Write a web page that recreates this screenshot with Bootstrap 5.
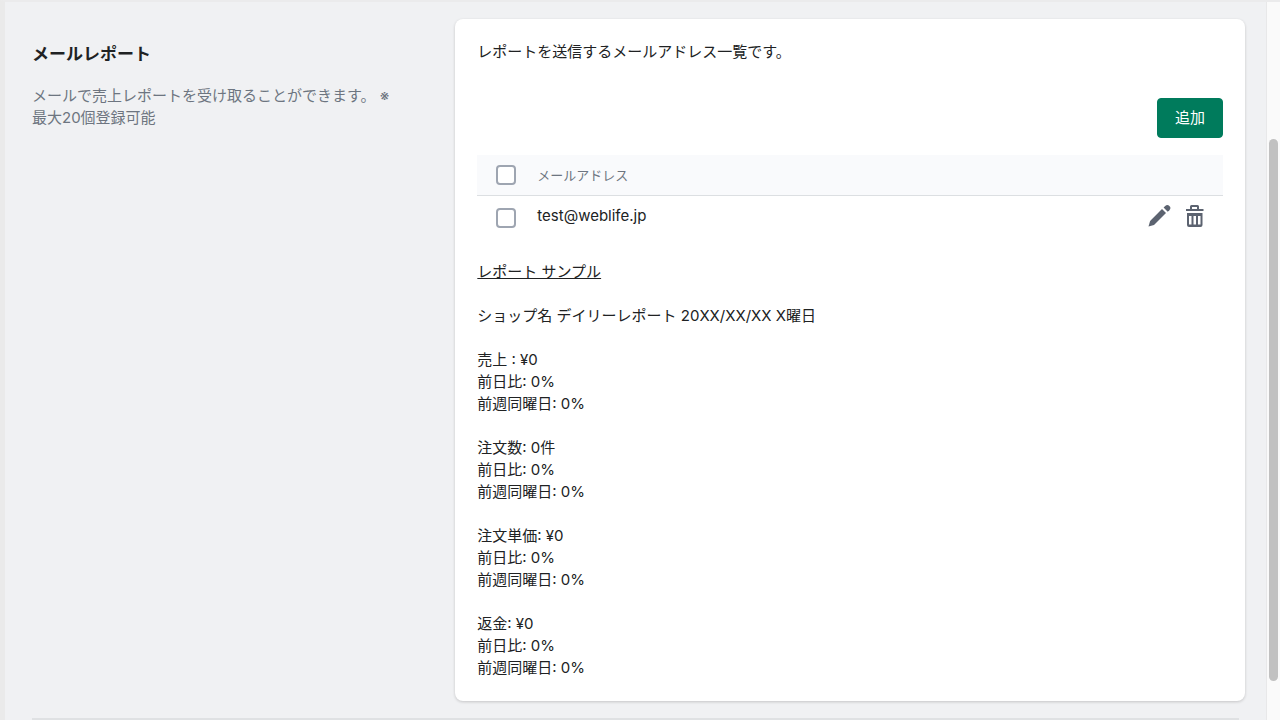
<!DOCTYPE html>
<html lang="ja">
<head>
<meta charset="utf-8">
<meta name="viewport" content="width=device-width, initial-scale=1">
<title>メールレポート</title>
<link href="https://cdn.jsdelivr.net/npm/bootstrap@5.3.0/dist/css/bootstrap.min.css" rel="stylesheet">
<style>
  body { font-family: Inter, "Noto Sans CJK JP", sans-serif; font-size: 15px; line-height: 22px; color: #202223; background: #f0f1f3; }
  .app-frame { border-left: 5px solid #eaeaea; border-top: 2px solid #ebebec; }
  .settings-page { padding: 17px 21px 0 27px; }
  .settings-side { width: 34.9%; padding: 23px 56px 0 0; }
  .settings-side h1 { font-size: 17px; line-height: 24px; margin-bottom: 19px; }
  .settings-side p { color: #6d7580; }
  .report-card { border: 0; border-radius: 8px; box-shadow: 0 1px 3px rgba(23,24,24,.2); }
  .report-card .card-body { padding: 22px; }
  .btn-add { --bs-btn-color: #fff; --bs-btn-bg: #007b5c; --bs-btn-border-color: #007b5c; --bs-btn-hover-color: #fff; --bs-btn-hover-bg: #006e52; --bs-btn-border-radius: 4px; --bs-btn-font-size: 15px; --bs-btn-line-height: 22px; --bs-btn-padding-y: 8px; --bs-btn-padding-x: 17px; }
  .card-actions { margin: 35px 0 17px; }
  .mail-table { --bs-table-bg: transparent; color: inherit; }
  .mail-table th, .mail-table td { padding: 0; height: 42px; border: 0; vertical-align: middle; }
  .mail-table thead th { height: 40px; background: #f9fafc; border-bottom: 1px solid #dcdfe2; font-size: 13px; font-weight: 400; color: #6d7580; }
  .mail-table .col-check { width: 60px; padding-left: 19px; }
  .mail-table .form-check-input { width: 20px; height: 20px; margin: 0; border: 2px solid #9ea5b1; border-radius: 4px; background-color: #fff; }
  .mail-table tbody .col-check { padding-top: 4px; }
  .icon-btn { width: 24px; height: 24px; color: #5c6370; }
  .icon-btn svg { width: 24px; height: 24px; }
  .report-text p { margin-bottom: 22px; }
  .page-rule { margin: 17px 6px 0 0; border-top: 2px solid #dfe1e3; opacity: 1; }
  .scroll-track { width: 14px; background: #fafafa; border-left: 1px solid #e8e8e9; }
  .scroll-thumb { width: 9px; margin: 137px 0 39px; border-radius: 5px; background: #c1c1c1; }
</style>
</head>
<body>
<div class="app-frame d-flex min-vh-100">
  <main class="settings-page flex-grow-1">
    <div class="d-flex">
      <section class="settings-side flex-shrink-0">
        <h1 class="fw-bold">メールレポート</h1>
        <p class="mb-0">メールで売上レポートを受け取ることができます。 ※最大20個登録可能</p>
      </section>
      <section class="card report-card flex-grow-1">
        <div class="card-body">
          <p class="mb-0">レポートを送信するメールアドレス一覧です。</p>
          <div class="card-actions d-flex justify-content-end">
            <button type="button" class="btn btn-add">追加</button>
          </div>
          <table class="table mail-table mb-4">
            <thead>
              <tr>
                <th class="col-check"><input class="form-check-input d-block" type="checkbox" aria-label="すべて選択"></th>
                <th scope="col">メールアドレス</th>
                <th></th>
              </tr>
            </thead>
            <tbody>
              <tr>
                <td class="col-check"><input class="form-check-input d-block" type="checkbox" id="mail1"></td>
                <td><label for="mail1">test@weblife.jp</label></td>
                <td>
                  <div class="d-flex justify-content-end gap-2 me-3">
                    <button type="button" class="btn icon-btn border-0 p-0 me-1" aria-label="編集">
                      <svg class="d-block" viewBox="0 0 24 24" fill="currentColor"><path d="M1.500 22.500 3.100 17 15 5l4 4L7 21z"/><path d="M16.600 3.600 18.200 2a2.900 2.900 0 0 1 4.200 4.200l-1.700 1.600z"/></svg>
                    </button>
                    <button type="button" class="btn icon-btn border-0 p-0" aria-label="削除">
                      <svg class="d-block" viewBox="0 0 24 24" fill="currentColor"><path fill-rule="evenodd" d="M3 5h4V2.500A1.500 1.500 0 0 1 8.500 1h6A1.500 1.500 0 0 1 16 2.500V5h4.500v2H3zM9 3v2h5V3zM4 9h15.500v12a2 2 0 0 1-2 2H6a2 2 0 0 1-2-2zM6 12v8.500h2.500V12zm4.500 0v8.500H13V12zm4.500 0v8.500h2.500V12z"/></svg>
                    </button>
                  </div>
                </td>
              </tr>
            </tbody>
          </table>
          <div class="report-text">
            <p><a href="#" class="text-reset">レポート サンプル</a></p>
            <p>ショップ名 デイリーレポート 20XX/XX/XX X曜日</p>
            <p>売上 : ¥0<br>前日比: 0%<br>前週同曜日: 0%</p>
            <p>注文数: 0件<br>前日比: 0%<br>前週同曜日: 0%</p>
            <p>注文単価: ¥0<br>前日比: 0%<br>前週同曜日: 0%</p>
            <p class="mb-0">返金: ¥0<br>前日比: 0%<br>前週同曜日: 0%</p>
          </div>
        </div>
      </section>
    </div>
    <hr class="page-rule">
  </main>
  <div class="scroll-track d-flex justify-content-center flex-shrink-0" aria-hidden="true"><div class="scroll-thumb"></div></div>
</div>
<script src="https://cdn.jsdelivr.net/npm/bootstrap@5.3.0/dist/js/bootstrap.bundle.min.js"></script>
</body>
</html>
